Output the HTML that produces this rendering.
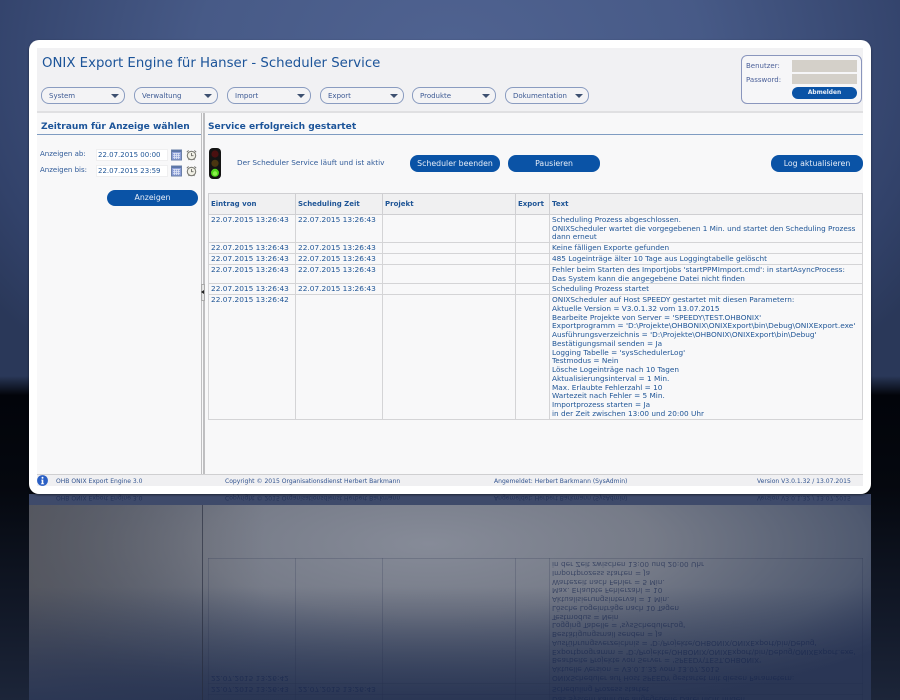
<!DOCTYPE html>
<html><head><meta charset="utf-8"><title>ONIX Export Engine</title>
<style>
*{box-sizing:border-box}
html,body{margin:0;padding:0}
body{width:900px;height:700px;position:relative;overflow:hidden;background:#000;font-family:"DejaVu Sans","Liberation Sans",sans-serif;color:#1f5596;font-size:7px}
.a{position:absolute;white-space:nowrap}
#bg1{left:0;top:0;width:900px;height:395px;background:radial-gradient(ellipse 560px 420px at 450px 60px,#506391 0%,#475a87 45%,#32426a 85%,#2a3859 100%)}
#bg2{left:0;top:376px;width:900px;height:24px;background:linear-gradient(rgba(0,0,0,0),#02040a 80%)}
#bg3{left:0;top:395px;width:900px;height:305px;background:linear-gradient(#02040a 0,#05080f 30%,#131a2a 75%,#1c2539 100%)}
#win{left:29px;top:40px;width:842px;height:454px;background:#fff;border-radius:10px;box-shadow:0 1px 2px rgba(0,0,0,.5)}
#in{left:8px;top:8px;width:826px;height:438px;background:#f8f8f9}
.dd{height:17px;width:84px;top:87px;border:1px solid #8a9cc0;border-radius:8px;background:#f3f3f5;padding-left:7px;line-height:16px;color:#3d5a94}
.dd:after{content:"";position:absolute;right:5px;top:6px;border:4px solid transparent;border-top:4px solid #3d5070;border-bottom:0}
.btn{background:#0a53a6;color:#e8eef8;border-radius:8px;text-align:center;font-size:7.8px;line-height:16px}
table{position:absolute;left:208px;top:193px;border-collapse:collapse;table-layout:fixed;width:654px}
td,th{border:1px solid #d4d4d6;padding:1px 2px 0;vertical-align:top;font-size:7.4px;line-height:8.75px;text-align:left;overflow:hidden;white-space:nowrap}
td.t{font-size:7.32px}
th{height:21px;background:#f0f0f1;font-size:7px;padding-top:0;font-weight:bold;vertical-align:middle;border-color:#cfcfd2}
.ft{top:478px;line-height:8px;font-size:6.05px;color:#33548f}
#mirbg{left:29px;top:494px;width:842px;height:206px;overflow:hidden;background:radial-gradient(ellipse 560px 175px at 400px 50px,#868b98 0%,#767b88 40%,#505a70 78%,#2b3757 100%),#2b3757}
#mirbg:before{content:"";position:absolute;left:0;top:0;width:100%;height:100%;background:linear-gradient(rgba(42,54,84,0) 45%,rgba(42,54,84,.95) 100%),linear-gradient(90deg,rgba(85,85,90,.75) 0,rgba(85,85,90,0) 28%)}
#mirbg:after{content:"";position:absolute;left:0;top:0;width:100%;height:11px;background:#3e4a6a}
#mir{left:0;top:494px;width:900px;height:206px;overflow:hidden;opacity:.62}
#flip{left:0;top:-216px;width:900px;height:211px;transform-origin:0 211px;transform:scaleY(-1);overflow:hidden}
#flip table{top:-14px}
#flip td{border-color:rgba(30,40,70,.32);background:none;color:#15244c}
#flip .ft{color:#15244c;top:199px}
</style></head><body>
<div class="a" id="bg1"></div><div class="a" id="bg3"></div><div class="a" id="bg2"></div>
<div class="a" id="mirbg"></div>
<div class="a" id="mir"><div class="a" id="flip">
<table><colgroup><col style="width:87px"><col style="width:87px"><col style="width:133px"><col style="width:34px"><col style="width:313px"></colgroup>
<tr style="height:19px"><td>22.07.2015 13:26:43</td><td>22.07.2015 13:26:43</td><td></td><td></td><td class="t" style="line-height:8.6px">Fehler beim Starten des Importjobs 'startPPMImport.cmd': in startAsyncProcess:<br>Das System kann die angegebene Datei nicht finden</td></tr>
<tr style="height:11px"><td>22.07.2015 13:26:43</td><td>22.07.2015 13:26:43</td><td></td><td></td><td class="t">Scheduling Prozess startet</td></tr>
<tr style="height:124px"><td>22.07.2015 13:26:42</td><td></td><td></td><td></td><td class="t">ONIXScheduler auf Host SPEEDY gestartet mit diesen Parametern:<br>Aktuelle Version = V3.0.1.32 vom 13.07.2015<br>Bearbeite Projekte von Server = 'SPEEDY\TEST.OHBONIX'<br><span style="font-size:7.42px">Exportprogramm = 'D:\Projekte\OHBONIX\ONIXExport\bin\Debug\ONIXExport.exe'</span><br>Ausführungsverzeichnis = 'D:\Projekte\OHBONIX\ONIXExport\bin\Debug'<br>Bestätigungsmail senden = Ja<br>Logging Tabelle = 'sysSchedulerLog'<br>Testmodus = Nein<br>Lösche Logeinträge nach 10 Tagen<br>Aktualisierungsinterval = 1 Min.<br>Max. Erlaubte Fehlerzahl = 10<br>Wartezeit nach Fehler = 5 Min.<br>Importprozess starten = Ja<br>in der Zeit zwischen 13:00 und 20:00 Uhr</td></tr>
</table>
<div class="a ft" style="left:56px">OHB ONIX Export Engine 3.0</div>
<div class="a ft" style="left:225px">Copyright © 2015 Organisationsdienst Herbert Barkmann</div>
<div class="a ft" style="left:494px">Angemeldet: Herbert Barkmann (SysAdmin)</div>
<div class="a ft" style="left:757px">Version V3.0.1.32 / 13.07.2015</div>
<div class="a" style="left:202px;top:0;width:1px;height:195px;background:#262b3c"></div>
</div></div>

<div class="a" id="win"><div class="a" id="in"></div></div>
<div class="a" style="left:37px;top:48px;width:826px;height:63px;background:#f1f1f3"></div>
<div class="a" style="left:37px;top:111px;width:826px;height:2px;background:#e0e0e2"></div>
<div class="a" style="left:42px;top:55px;font-size:13.3px;line-height:17px;color:#1c5499">ONIX Export Engine für Hanser - Scheduler Service</div>
<div class="a dd" style="left:41px">System</div>
<div class="a dd" style="left:134px">Verwaltung</div>
<div class="a dd" style="left:227px">Import</div>
<div class="a dd" style="left:320px">Export</div>
<div class="a dd" style="left:412px">Produkte</div>
<div class="a dd" style="left:505px">Dokumentation</div>
<div class="a" style="left:741px;top:55px;width:121px;height:49px;border:1px solid #8a96bd;border-radius:6px;background:#f6f6f8"></div>
<div class="a" style="left:746px;top:62px;color:#4a5f98;line-height:8px">Benutzer:</div>
<div class="a" style="left:746px;top:76px;color:#4a5f98;line-height:8px">Password:</div>
<div class="a" style="left:792px;top:60px;width:65px;height:12px;background:#d4d0c9"></div>
<div class="a" style="left:792px;top:74px;width:65px;height:10px;background:#d4d0c9"></div>
<div class="a btn" style="left:792px;top:87px;width:65px;height:12px;border-radius:6px;font-size:5.9px;line-height:12px;font-weight:bold">Abmelden</div>

<div class="a" style="left:41px;top:121px;font-size:9.1px;line-height:12px;font-weight:bold;color:#1c5499">Zeitraum für Anzeige wählen</div>
<div class="a" style="left:37px;top:134px;width:164px;height:1px;background:#7f9cc2"></div>
<div class="a" style="left:208px;top:121px;font-size:9.1px;line-height:12px;font-weight:bold;color:#1c5499">Service erfolgreich gestartet</div>
<div class="a" style="left:208px;top:134px;width:655px;height:1px;background:#7f9cc2"></div>
<div class="a" style="left:200.5px;top:113px;width:1.5px;height:361px;background:#bfbfc1"></div>
<div class="a" style="left:203px;top:113px;width:1.5px;height:361px;background:#bfbfc1"></div>
<div class="a" style="left:200.5px;top:284px;width:4px;height:17px;background:#e4e4e4;border:1px solid #aaa"></div>
<div class="a" style="left:201px;top:290px;border:2.5px solid transparent;border-right:3px solid #222;border-left:0"></div>

<div class="a" style="left:40px;top:150px;line-height:8px;color:#2f5a98">Anzeigen ab:</div>
<div class="a" style="left:40px;top:166px;line-height:8px;color:#2f5a98">Anzeigen bis:</div>
<div class="a" style="left:96px;top:149px;width:72px;height:12px;background:#fff;border:1px solid #efeff0;line-height:11px;padding-left:1px">22.07.2015 00:00</div>
<div class="a" style="left:96px;top:165px;width:72px;height:12px;background:#fff;border:1px solid #efeff0;line-height:11px;padding-left:1px">22.07.2015 23:59</div>
<svg class="a" style="left:171px;top:149px" width="11" height="12" viewBox="0 0 11 12"><rect x=".5" y="1" width="10" height="10" fill="#8b9dd6" stroke="#6a7fa8"/><rect x="1" y="1" width="9" height="2" fill="#5c76a8"/><path d="M2 4.5h7M2 6.5h7M2 8.5h7M3.5 4v6M5.5 4v6M7.5 4v6" stroke="#dde4f5" stroke-width=".8"/></svg>
<svg class="a" style="left:171px;top:165px" width="11" height="12" viewBox="0 0 11 12"><rect x=".5" y="1" width="10" height="10" fill="#8b9dd6" stroke="#6a7fa8"/><rect x="1" y="1" width="9" height="2" fill="#5c76a8"/><path d="M2 4.5h7M2 6.5h7M2 8.5h7M3.5 4v6M5.5 4v6M7.5 4v6" stroke="#dde4f5" stroke-width=".8"/></svg>
<svg class="a" style="left:186px;top:149px" width="11" height="12" viewBox="0 0 11 12"><circle cx="5.5" cy="6.5" r="4.2" fill="#f1f0e6" stroke="#7d7d76" stroke-width="1.1"/><path d="M5.5 4v2.7h2M.8 3.2 2.6 1.4M10.2 3.2 8.4 1.4M2.5 11l1-1.2M8.5 11l-1-1.2" stroke="#6c6c66" stroke-width=".9" fill="none"/></svg>
<svg class="a" style="left:186px;top:165px" width="11" height="12" viewBox="0 0 11 12"><circle cx="5.5" cy="6.5" r="4.2" fill="#f1f0e6" stroke="#7d7d76" stroke-width="1.1"/><path d="M5.5 4v2.7h2M.8 3.2 2.6 1.4M10.2 3.2 8.4 1.4M2.5 11l1-1.2M8.5 11l-1-1.2" stroke="#6c6c66" stroke-width=".9" fill="none"/></svg>
<div class="a btn" style="left:107px;top:190px;width:91px;height:16px">Anzeigen</div>

<svg class="a" style="left:209px;top:148px" width="12" height="31" viewBox="0 0 12 31"><rect width="12" height="31" rx="4" fill="#141414"/><circle cx="6" cy="6" r="3.6" fill="#4a1010"/><circle cx="6" cy="15.3" r="3.6" fill="#4a3510"/><circle cx="6" cy="24.8" r="4" fill="#4fd31a"/><circle cx="6" cy="25.5" r="2.2" fill="#8cf24a"/></svg>
<div class="a" style="left:237px;top:159px;line-height:8px;font-size:7.3px;color:#2f5a98">Der Scheduler Service läuft und ist aktiv</div>
<div class="a btn" style="left:410px;top:155px;width:90px;height:17px;line-height:17px">Scheduler beenden</div>
<div class="a btn" style="left:508px;top:155px;width:92px;height:17px;line-height:17px">Pausieren</div>
<div class="a btn" style="left:771px;top:155px;width:92px;height:17px;line-height:17px">Log aktualisieren</div>

<table style="background:#f8f8f9"><colgroup><col style="width:87px"><col style="width:87px"><col style="width:133px"><col style="width:34px"><col style="width:313px"></colgroup>
<tr><th>Eintrag von</th><th>Scheduling Zeit</th><th>Projekt</th><th>Export</th><th>Text</th></tr>
<tr style="height:28px"><td>22.07.2015 13:26:43</td><td>22.07.2015 13:26:43</td><td></td><td></td><td class="t" style="line-height:8.6px">Scheduling Prozess abgeschlossen.<br><span style="font-size:7.25px">ONIXScheduler wartet die vorgegebenen 1 Min. und startet den Scheduling Prozess</span><br>dann erneut</td></tr>
<tr style="height:11px"><td>22.07.2015 13:26:43</td><td>22.07.2015 13:26:43</td><td></td><td></td><td class="t">Keine fälligen Exporte gefunden</td></tr>
<tr style="height:11px"><td>22.07.2015 13:26:43</td><td>22.07.2015 13:26:43</td><td></td><td></td><td class="t">485 Logeinträge älter 10 Tage aus Loggingtabelle gelöscht</td></tr>
<tr style="height:19px"><td>22.07.2015 13:26:43</td><td>22.07.2015 13:26:43</td><td></td><td></td><td class="t" style="line-height:8.6px">Fehler beim Starten des Importjobs 'startPPMImport.cmd': in startAsyncProcess:<br>Das System kann die angegebene Datei nicht finden</td></tr>
<tr style="height:11px"><td>22.07.2015 13:26:43</td><td>22.07.2015 13:26:43</td><td></td><td></td><td class="t">Scheduling Prozess startet</td></tr>
<tr style="height:124px"><td>22.07.2015 13:26:42</td><td></td><td></td><td></td><td class="t">ONIXScheduler auf Host SPEEDY gestartet mit diesen Parametern:<br>Aktuelle Version = V3.0.1.32 vom 13.07.2015<br>Bearbeite Projekte von Server = 'SPEEDY\TEST.OHBONIX'<br><span style="font-size:7.42px">Exportprogramm = 'D:\Projekte\OHBONIX\ONIXExport\bin\Debug\ONIXExport.exe'</span><br>Ausführungsverzeichnis = 'D:\Projekte\OHBONIX\ONIXExport\bin\Debug'<br>Bestätigungsmail senden = Ja<br>Logging Tabelle = 'sysSchedulerLog'<br>Testmodus = Nein<br>Lösche Logeinträge nach 10 Tagen<br>Aktualisierungsinterval = 1 Min.<br>Max. Erlaubte Fehlerzahl = 10<br>Wartezeit nach Fehler = 5 Min.<br>Importprozess starten = Ja<br>in der Zeit zwischen 13:00 und 20:00 Uhr</td></tr>
</table>

<div class="a" style="left:37px;top:474px;width:826px;height:12px;background:#f0f0f2;border-top:1px solid #cfcfd1"></div>
<svg class="a" style="left:37px;top:475px" width="11" height="11" viewBox="0 0 11 11"><circle cx="5.5" cy="5.5" r="5.4" fill="#2a5fc4"/><circle cx="5.5" cy="2.7" r="1" fill="#fff"/><path d="M4.3 4.6h2v3.8h.8v.9H3.9v-.9h.8V5.5h-.4z" fill="#fff"/></svg>
<div class="a ft" style="left:56px">OHB ONIX Export Engine 3.0</div>
<div class="a ft" style="left:225px">Copyright © 2015 Organisationsdienst Herbert Barkmann</div>
<div class="a ft" style="left:494px">Angemeldet: Herbert Barkmann (SysAdmin)</div>
<div class="a ft" style="left:757px">Version V3.0.1.32 / 13.07.2015</div>
</body></html>
